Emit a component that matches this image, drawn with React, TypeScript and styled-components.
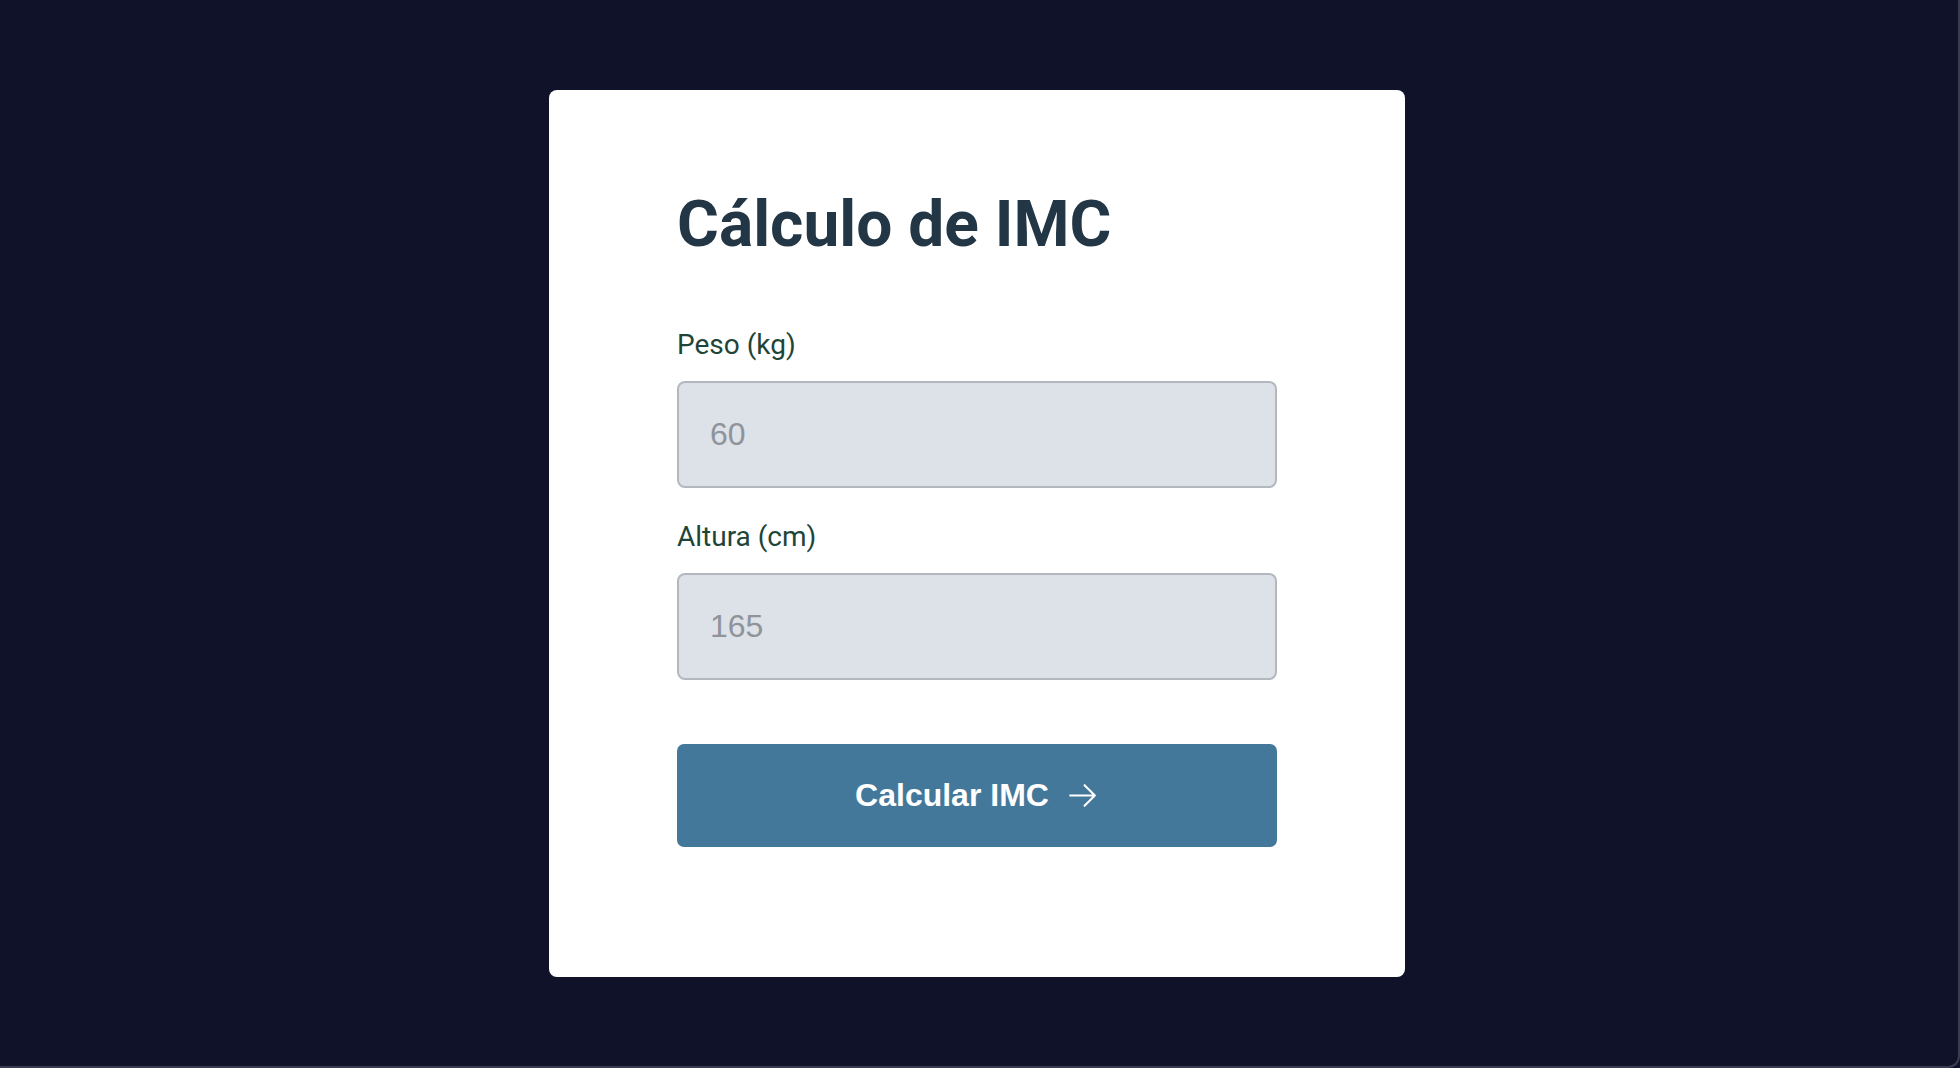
import React from "react";
import styled, { createGlobalStyle } from "styled-components";

const GlobalStyle = createGlobalStyle`
  * { box-sizing: border-box; }
  html, body { margin: 0; padding: 0; background: #0f1228; }
  body { font-family: Roboto, "Liberation Sans", sans-serif; }
`;

const Page = styled.main`
  height: 100vh;
  display: flex;
  align-items: center;
  justify-content: center;
  padding-right: 4px;
  background: #0f1228;
  border-right: 2px solid #3a3d50;
  border-bottom: 2px solid #3a3d50;
  border-bottom-right-radius: 12px;
`;

const Card = styled.section`
  width: 856px;
  background: #ffffff;
  border-radius: 8px;
  padding: 97px 128px 130px;
  display: flex;
  flex-direction: column;
`;

const Title = styled.h1`
  margin: 0 0 66px;
  font-family: Roboto, "Liberation Sans", sans-serif;
  font-weight: 700;
  font-size: 64px;
  line-height: 75px;
  color: #223645;
`;

const Form = styled.form`
  display: flex;
  flex-direction: column;
  gap: 32px;
`;

const Field = styled.div`
  display: flex;
  flex-direction: column;
`;

const Label = styled.label`
  font-family: Roboto, "Liberation Sans", sans-serif;
  font-size: 28px;
  line-height: 33px;
  color: #1f4538;
  margin-bottom: 20px;
`;

const Input = styled.input`
  height: 107px;
  width: 100%;
  background: #dde1e8;
  border: 2px solid #b3b7be;
  border-radius: 8px;
  padding: 0 31px;
  font-family: "Liberation Sans", Arial, sans-serif;
  font-size: 32px;
  color: #8f939a;
  outline: none;
  &::placeholder { color: #8f939a; }
`;

const Button = styled.button`
  margin-top: 32px;
  height: 103px;
  width: 100%;
  border: none;
  border-radius: 7px;
  background: #44789a;
  color: #ffffff;
  display: flex;
  align-items: center;
  justify-content: center;
  gap: 17px;
  font-family: "Liberation Sans", Arial, sans-serif;
  font-weight: 700;
  font-size: 32px;
  cursor: pointer;
`;

const ArrowIcon = () => (
  <svg width="33" height="33" viewBox="0 0 24 24" fill="none" stroke="currentColor" strokeWidth={1.5} strokeLinecap="round" strokeLinejoin="round">
    <path d="M13.5 4.5 21 12m0 0-7.5 7.5M21 12H3" />
  </svg>
);

export default function App() {
  return (
    <>
      <GlobalStyle />
      <Page>
        <Card>
          <Title>Cálculo de IMC</Title>
          <Form onSubmit={(e) => e.preventDefault()}>
            <Field>
              <Label htmlFor="peso">Peso (kg)</Label>
              <Input id="peso" type="text" placeholder="60" />
            </Field>
            <Field>
              <Label htmlFor="altura">Altura (cm)</Label>
              <Input id="altura" type="text" placeholder="165" />
            </Field>
            <Button type="submit">
              Calcular IMC
              <ArrowIcon />
            </Button>
          </Form>
        </Card>
      </Page>
    </>
  );
}
